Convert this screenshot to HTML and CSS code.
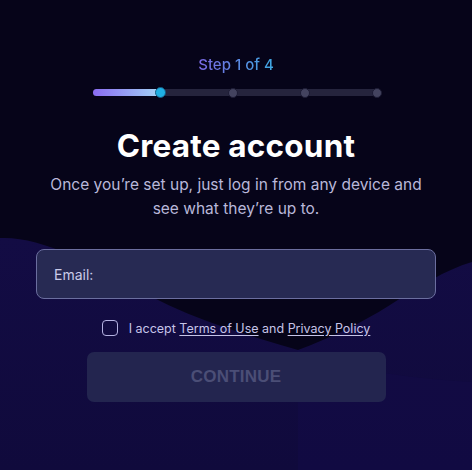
FILE: index.html
```html
<!DOCTYPE html>
<html>
<head>
<meta charset="utf-8">
<link rel="stylesheet" href="styles.css">
</head>
<body>
<div class="page">
  <svg class="waves" width="472" height="470" viewBox="0 0 472 470">
    <defs>
      <linearGradient id="g1" x1="0" y1="0" x2="0" y2="1">
        <stop offset="0" stop-color="#130c44"/>
        <stop offset="1" stop-color="#100a3c"/>
      </linearGradient>
    </defs>
    <path d="M0 238 C40 236 90 262 150 296 C200 322 250 336 298 350 C330 338 360 324 390 305 C420 286 445 270 472 262 L472 470 L0 470 Z" fill="url(#g1)"/>
    <path d="M298 350 C340 368 400 378 472 382 L472 470 L298 470 Z" fill="#150c4a" opacity="0.45"/>
  </svg>
  <main class="content">
    <div class="step">Step 1 of 4</div>
    <div class="bar">
      <div class="fill" style="width:67px"></div>
      <span class="dot active"></span>
      <span class="dot"></span>
      <span class="dot"></span>
      <span class="dot"></span>
    </div>
    <h1 class="title">Create account</h1>
    <p class="sub">Once you’re set up, just log in from any device and<br>see what they’re up to.</p>
    <label class="field"><span class="label">Email:</span></label>
    <div class="accept">
      <span class="box"></span>
      <span class="accept-text">I accept <a href="#">Terms of Use</a> and <a href="#">Privacy Policy</a></span>
    </div>
    <button class="btn">CONTINUE</button>
  </main>
</div>
</body>
</html>
```
FILE: styles.css
```css
html, body {
  margin: 0;
  padding: 0;
  background: #060419;
}
.page {
  position: relative;
  width: 472px;
  height: 470px;
  overflow: hidden;
  background: #060419;
  font-family: Inter, "Noto Sans", sans-serif;
}
.waves {
  position: absolute;
  left: 0;
  top: 0;
  z-index: 0;
}
.content {
  position: relative;
  z-index: 1;
  display: flex;
  flex-direction: column;
  align-items: center;
  padding-top: 55px;
}
.step {
  font-size: 15px;
  line-height: 20px;
  font-weight: 500;
  background: linear-gradient(90deg, #7b68e4, #3ea8e2);
  -webkit-background-clip: text;
  background-clip: text;
  color: transparent;
}
.bar {
  position: relative;
  margin-top: 14px;
  width: 286px;
  height: 7px;
  border-radius: 4px;
  background: #25243d;
  display: flex;
  align-items: center;
  gap: 62px;
  padding-left: 62px;
  box-sizing: border-box;
}
.fill {
  position: absolute;
  left: 0;
  top: 0;
  height: 7px;
  border-radius: 4px;
  background: linear-gradient(90deg, #8a6cf2, #a3d4f6);
}
.dot {
  position: relative;
  width: 10px;
  height: 10px;
  box-sizing: border-box;
  border-radius: 50%;
  background: #43435f;
  border: 1.5px solid #1d1c35;
  flex: none;
}
.dot.active {
  background: #1fb0e4;
  border-color: #155a80;
  width: 11px;
  height: 11px;
}
.title {
  margin: 32px 0 0;
  font-size: 31.5px;
  line-height: 36px;
  font-weight: 700;
  color: #ffffff;
  letter-spacing: 0.2px;
}
.sub {
  margin: 9px 0 0;
  font-size: 15.5px;
  line-height: 24px;
  color: #b9b8da;
  text-align: center;
}
.field {
  margin-top: 28px;
  width: 400px;
  height: 50px;
  box-sizing: border-box;
  border: 1px solid #6b6e9f;
  border-radius: 8px;
  background: #272a53;
  display: flex;
  align-items: center;
  padding-left: 17px;
}
.label {
  font-size: 14px;
  color: #cacbe8;
}
.accept {
  margin-top: 19px;
  height: 20px;
  display: flex;
  align-items: center;
  gap: 11px;
}
.box {
  width: 16px;
  height: 16px;
  box-sizing: border-box;
  border: 1.5px solid #b5b2e2;
  border-radius: 4px;
}
.accept-text {
  font-size: 12.5px;
  color: #c6c4e8;
  letter-spacing: 0;
}
.accept-text a {
  color: #c6c4e8;
  text-decoration: underline;
  text-underline-offset: 2px;
}
.btn {
  margin-top: 14px;
  width: 299px;
  height: 50px;
  border: none;
  border-radius: 7px;
  background: #23254f;
  color: #4b4e76;
  font-family: "Liberation Sans", Arial, sans-serif;
  font-weight: 700;
  font-size: 17px;
  letter-spacing: 0.2px;
}
```
